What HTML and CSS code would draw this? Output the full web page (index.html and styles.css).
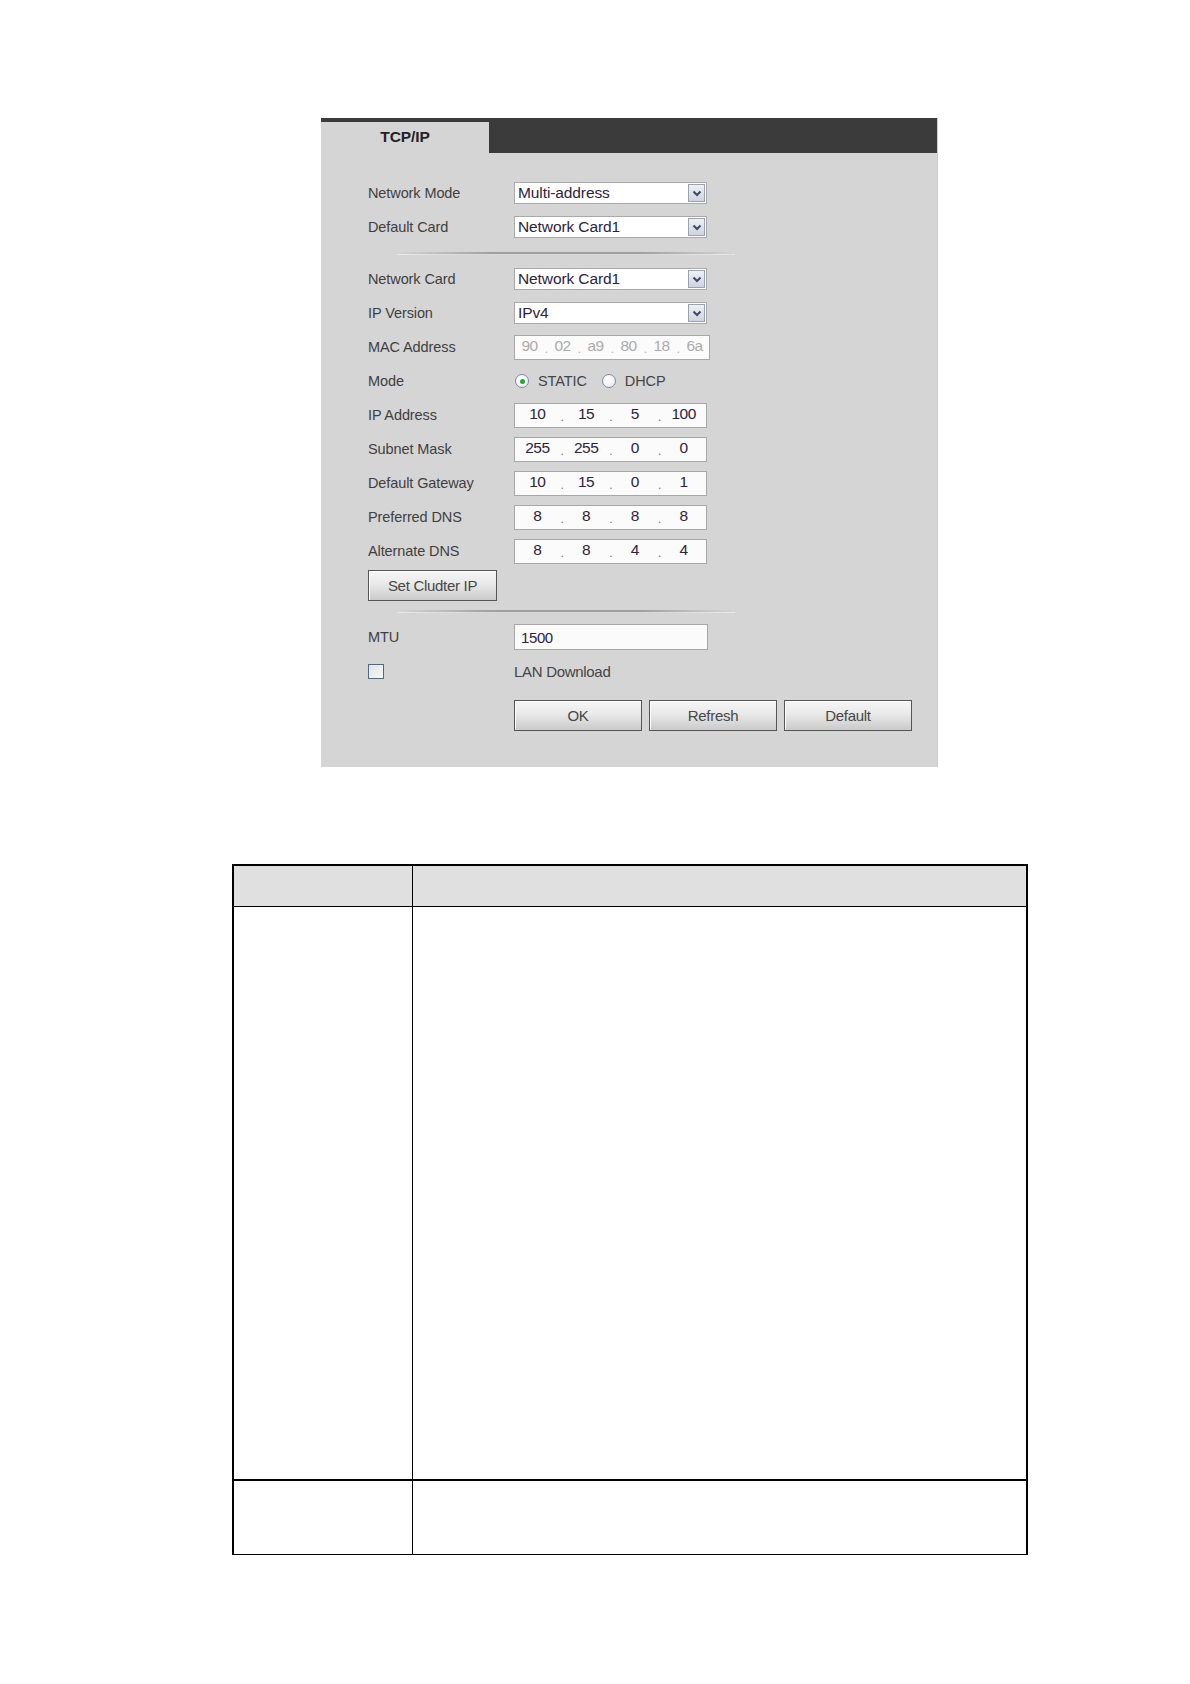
FILE: index.html
```html
<!DOCTYPE html>
<html>
<head>
<meta charset="utf-8">
<title>TCP/IP</title>
<link rel="stylesheet" href="styles.css">
</head>
<body>
<div class="page">
  <div class="panel">
    <div class="tabbar"><div class="tab">TCP/IP</div></div>
    <div class="content">
      <div class="row"><div class="label">Network Mode</div>
        <div class="select"><span class="sel-text">Multi-address</span><span class="sel-arrow"><svg width="10" height="7" viewBox="0 0 10 7"><path d="M1.5 1.5 L5 5 L8.5 1.5" fill="none" stroke="#3d4966" stroke-width="2"/></svg></span></div></div>
      <div class="row"><div class="label">Default Card</div>
        <div class="select"><span class="sel-text">Network Card1</span><span class="sel-arrow"><svg width="10" height="7" viewBox="0 0 10 7"><path d="M1.5 1.5 L5 5 L8.5 1.5" fill="none" stroke="#3d4966" stroke-width="2"/></svg></span></div></div>
      <div class="sep"></div>
      <div class="row"><div class="label">Network Card</div>
        <div class="select"><span class="sel-text">Network Card1</span><span class="sel-arrow"><svg width="10" height="7" viewBox="0 0 10 7"><path d="M1.5 1.5 L5 5 L8.5 1.5" fill="none" stroke="#3d4966" stroke-width="2"/></svg></span></div></div>
      <div class="row"><div class="label">IP Version</div>
        <div class="select"><span class="sel-text">IPv4</span><span class="sel-arrow"><svg width="10" height="7" viewBox="0 0 10 7"><path d="M1.5 1.5 L5 5 L8.5 1.5" fill="none" stroke="#3d4966" stroke-width="2"/></svg></span></div></div>
      <div class="row"><div class="label">MAC Address</div>
        <div class="mac"><span>90</span><i>.</i><span>02</span><i>.</i><span>a9</span><i>.</i><span>80</span><i>.</i><span>18</span><i>.</i><span>6a</span></div></div>
      <div class="row"><div class="label">Mode</div>
        <div class="radios">
          <span class="radio checked"></span><span class="radio-text">STATIC</span>
          <span class="radio"></span><span class="radio-text">DHCP</span>
        </div></div>
      <div class="row"><div class="label">IP Address</div>
        <div class="ip"><span>10</span><i>.</i><span>15</span><i>.</i><span>5</span><i>.</i><span>100</span></div></div>
      <div class="row"><div class="label">Subnet Mask</div>
        <div class="ip"><span>255</span><i>.</i><span>255</span><i>.</i><span>0</span><i>.</i><span>0</span></div></div>
      <div class="row"><div class="label">Default Gateway</div>
        <div class="ip"><span>10</span><i>.</i><span>15</span><i>.</i><span>0</span><i>.</i><span>1</span></div></div>
      <div class="row"><div class="label">Preferred DNS</div>
        <div class="ip"><span>8</span><i>.</i><span>8</span><i>.</i><span>8</span><i>.</i><span>8</span></div></div>
      <div class="row"><div class="label">Alternate DNS</div>
        <div class="ip"><span>8</span><i>.</i><span>8</span><i>.</i><span>4</span><i>.</i><span>4</span></div></div>
      <div class="row"><button class="btn btn-wide">Set Cludter IP</button></div>
      <div class="sep"></div>
      <div class="row"><div class="label">MTU</div>
        <div class="text-input">1500</div></div>
      <div class="row"><div class="label"><span class="checkbox"></span></div>
        <div class="plain">LAN Download</div></div>
      <div class="actions">
        <button class="btn">OK</button>
        <button class="btn">Refresh</button>
        <button class="btn">Default</button>
      </div>
    </div>
  </div>

  <div class="spec">
    <div class="cell head left"></div>
    <div class="cell head"></div>
    <div class="cell left mid"></div>
    <div class="cell mid"></div>
    <div class="cell left"></div>
    <div class="cell"></div>
  </div>
</div>
</body>
</html>
```

FILE: styles.css
```css
html, body {
  margin: 0;
  padding: 0;
  background: #ffffff;
}

.page {
  padding-top: 118px;
  padding-bottom: 129px;
  font-family: "Liberation Sans", Arial, sans-serif;
}

.panel {
  margin-left: 321px;
  width: 617px;
  height: 649px;
  background: #d5d5d5;
  box-sizing: border-box;
  border-right: 1px solid #cdcdcd;
}

.tabbar {
  height: 35px;
  background: #3b3b3b;
  padding-top: 4px;
  box-sizing: border-box;
  display: flex;
}

.tab {
  width: 168px;
  height: 31px;
  background: #d5d5d5;
  color: #222222;
  font-weight: bold;
  font-size: 15.5px;
  letter-spacing: -0.1px;
  display: flex;
  align-items: center;
  justify-content: center;
  padding-bottom: 2px;
  box-sizing: border-box;
}

.content {
  padding: 23px 0 0 47px;
}

.row {
  display: flex;
  align-items: center;
  height: 34px;
}

.label {
  width: 146px;
  flex: none;
  font-size: 14.5px;
  letter-spacing: -0.1px;
  color: #3f3f3f;
  display: flex;
  align-items: center;
}

.select {
  width: 193px;
  height: 22px;
  box-sizing: border-box;
  border: 1px solid #a9a9a9;
  background: #ffffff;
  display: flex;
  align-items: stretch;
}

.sel-text {
  flex: 1;
  padding-left: 3px;
  font-size: 15.5px;
  color: #2d2340;
  display: flex;
  align-items: center;
  letter-spacing: -0.1px;
}

.sel-arrow {
  width: 17px;
  margin: 1px;
  box-sizing: border-box;
  border: 1px solid #98a2b3;
  background: linear-gradient(#eef1f6, #cdd4df);
  display: flex;
  align-items: center;
  justify-content: center;
}

.ip, .mac {
  height: 25px;
  box-sizing: border-box;
  border: 1px solid #a7a7a7;
  background: #fbfbfb;
  display: grid;
  align-items: center;
  font-size: 15.5px;
  letter-spacing: -0.6px;
}

.ip {
  width: 193px;
  grid-template-columns: 1fr 4px 1fr 4px 1fr 4px 1fr;
  color: #2d2340;
}

.mac {
  width: 196px;
  grid-template-columns: 1fr 4px 1fr 4px 1fr 4px 1fr 4px 1fr 4px 1fr;
  color: #ababab;
}

.ip span, .mac span {
  text-align: center;
  margin-top: -3px;
}

.ip i, .mac i {
  font-style: normal;
  text-align: center;
  color: #777777;
  font-size: 12px;
  margin-top: 4px;
}

.mac i {
  color: #b5b5b5;
}

.radios {
  display: flex;
  align-items: center;
  font-size: 14.5px;
  color: #454545;
}

.radio {
  width: 14px;
  height: 14px;
  box-sizing: border-box;
  border-radius: 50%;
  border: 1px solid #7e8c9c;
  background: radial-gradient(circle at 40% 35%, #ffffff, #e4e8ee);
  display: flex;
  align-items: center;
  justify-content: center;
  margin-left: 1px;
}

.radio.checked::after {
  content: "";
  width: 5px;
  height: 5px;
  border-radius: 50%;
  background: #2fa33a;
}

.radio-text {
  margin-left: 9px;
  margin-right: 14px;
  letter-spacing: -0.1px;
}

.btn {
  width: 128px;
  height: 31px;
  box-sizing: border-box;
  border: 1px solid #555555;
  background: linear-gradient(#f6f6f6, #e9e9e9 45%, #cacaca);
  box-shadow: inset 1px 1px 0 #ffffff;
  font-family: "Liberation Sans", Arial, sans-serif;
  font-size: 15px;
  letter-spacing: -0.3px;
  color: #474747;
  padding: 0;
  margin: 0;
}

.btn-wide {
  width: 129px;
}

.sep {
  margin: 8px 0 8px 29px;
  width: 338px;
  height: 2px;
  background: linear-gradient(to right, rgba(160,160,160,0), #a0a0a0 28%, #a0a0a0 72%, rgba(160,160,160,0));
  border-bottom: 1px solid rgba(240,240,240,0.7);
  box-sizing: content-box;
}

.sep + .row {
  margin-top: -1px;
}

.text-input {
  width: 194px;
  height: 26px;
  box-sizing: border-box;
  border: 1px solid #a7a7a7;
  background: #fbfbfb;
  padding-left: 6px;
  font-size: 15px;
  letter-spacing: -0.4px;
  color: #2d2340;
  display: flex;
  align-items: center;
}

.checkbox {
  width: 16px;
  height: 15px;
  box-sizing: border-box;
  border: 1px solid #4f6a88;
  background: linear-gradient(135deg, #dfe3e8, #f8f8f8);
}

.plain {
  font-size: 15px;
  letter-spacing: -0.3px;
  color: #454545;
}

.actions {
  margin-top: 12px;
  margin-left: 146px;
  display: flex;
  gap: 7px;
}

.spec {
  margin-top: 97px;
  margin-left: 232px;
  width: 796px;
  box-sizing: border-box;
  border: 2px solid #000000;
  border-bottom-width: 1px;
  display: grid;
  grid-template-columns: 179px 1fr;
  grid-template-rows: 41px 574px 73px;
}

.cell {
  background: #ffffff;
}

.cell.left {
  border-right: 1px solid #000000;
}

.cell.head {
  background: #e0e0e0;
  border-bottom: 1px solid #000000;
}

.cell.mid {
  border-bottom: 2px solid #000000;
}
```
